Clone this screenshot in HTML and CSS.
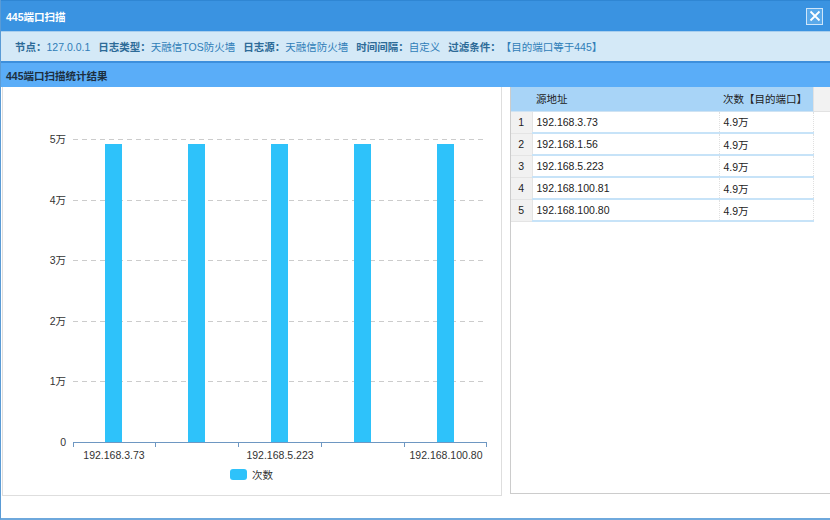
FILE: index.html
```html
<!DOCTYPE html>
<html lang="zh-CN">
<head>
    <meta charset="UTF-8">
    <title>445端口扫描</title>
    <link rel="stylesheet" href="styles.css">
</head>
<body>
    <div class="dialog">
        <div class="dialog-title">
            <span>445端口扫描</span>
            <a class="close-btn" href="#">
                <svg width="12" height="12" viewBox="0 0 12 12"><path d="M1.5 1.5 L10.5 10.5 M10.5 1.5 L1.5 10.5" stroke="#fff" stroke-width="1.8"/></svg>
            </a>
        </div>
        <div class="info-bar">
            <b>节点：</b><span>127.0.0.1</span>
            <b>日志类型：</b><span>天融信TOS防火墙</span>
            <b>日志源：</b><span>天融信防火墙</span>
            <b>时间间隔：</b><span>自定义</span>
            <b>过滤条件：</b><span>【目的端口等于445】</span>
        </div>
        <div class="section-head">445端口扫描统计结果</div>
        <div class="content">
            <div class="chart-panel">
                <svg width="498" height="406" viewBox="3 88 498 406">
                    <g class="grid">
                        <line x1="73" y1="140.5" x2="487" y2="140.5"/>
                        <line x1="73" y1="201.5" x2="487" y2="201.5"/>
                        <line x1="73" y1="261.5" x2="487" y2="261.5"/>
                        <line x1="73" y1="322.5" x2="487" y2="322.5"/>
                        <line x1="73" y1="382.5" x2="487" y2="382.5"/>
                    </g>
                    <g class="ylabels">
                        <text x="66" y="144">5万</text>
                        <text x="66" y="205">4万</text>
                        <text x="66" y="265">3万</text>
                        <text x="66" y="326">2万</text>
                        <text x="66" y="386">1万</text>
                        <text x="66" y="447">0</text>
                    </g>
                    <g class="bars">
                        <rect x="105" y="145" width="17" height="298"/>
                        <rect x="188" y="145" width="17" height="298"/>
                        <rect x="271" y="145" width="17" height="298"/>
                        <rect x="354" y="145" width="17" height="298"/>
                        <rect x="437" y="145" width="17" height="298"/>
                    </g>
                    <g class="axis">
                        <line x1="73" y1="443.5" x2="487" y2="443.5"/>
                        <line x1="73.5" y1="443" x2="73.5" y2="448"/>
                        <line x1="155.5" y1="443" x2="155.5" y2="448"/>
                        <line x1="238.5" y1="443" x2="238.5" y2="448"/>
                        <line x1="321.5" y1="443" x2="321.5" y2="448"/>
                        <line x1="404.5" y1="443" x2="404.5" y2="448"/>
                        <line x1="486.5" y1="443" x2="486.5" y2="448"/>
                    </g>
                    <g class="xlabels">
                        <text x="114" y="460">192.168.3.73</text>
                        <text x="280" y="460">192.168.5.223</text>
                        <text x="446" y="460">192.168.100.80</text>
                    </g>
                    <rect class="legend-box" x="230" y="470" width="17" height="11" rx="3"/>
                    <text class="legend-text" x="252" y="480">次数</text>
                </svg>
            </div>
            <div class="table-panel">
                <table class="result-table">
                    <thead>
                        <tr><th class="num"></th><th class="src">源地址</th><th class="cnt">次数【目的端口】</th><th class="pad"></th></tr>
                    </thead>
                    <tbody>
                        <tr><td class="num">1</td><td>192.168.3.73</td><td>4.9万</td><td class="pad"></td></tr>
                        <tr><td class="num">2</td><td>192.168.1.56</td><td>4.9万</td><td class="pad"></td></tr>
                        <tr><td class="num">3</td><td>192.168.5.223</td><td>4.9万</td><td class="pad"></td></tr>
                        <tr><td class="num">4</td><td>192.168.100.81</td><td>4.9万</td><td class="pad"></td></tr>
                        <tr><td class="num">5</td><td>192.168.100.80</td><td>4.9万</td><td class="pad"></td></tr>
                    </tbody>
                </table>
            </div>
        </div>
    </div>
</body>
</html>
```

FILE: styles.css
```css
* { margin: 0; padding: 0; box-sizing: border-box; }
body { font-family: "Liberation Sans", "Noto Sans CJK SC", sans-serif; font-size: 10.5px; color: #333; background: #fff; overflow: hidden; }
.dialog { width: 830px; height: 520px; border-left: 1px solid #5a9bd5; border-bottom: 2px solid #6ea8dc; display: flex; flex-direction: column; }
.dialog-title { height: 31px; background: #3a93e1; color: #fff; font-weight: bold; display: flex; align-items: center; justify-content: space-between; padding: 0 7px 0 5px; border-top: 1px solid #2f86d3; }
.close-btn { width: 17px; height: 17px; border: 1px solid #cfe6fa; background: #5aa9ea; display: flex; align-items: center; justify-content: center; }
.info-bar { height: 30px; background: #d4e9f7; border-top: 1px solid #a9cfee; display: flex; align-items: center; padding-left: 14px; color: #2f7db8; white-space: nowrap; }
.info-bar b { color: #2d6b98; margin-left: 8px; }
.info-bar b:first-child { margin-left: 0; }
.section-head { height: 26px; background: #5aadf8; border-top: 2px solid #3d8fdc; color: #1d2f40; font-weight: bold; display: flex; align-items: center; padding-left: 5px; }
.content { flex: 1; display: flex; gap: 8px; padding-left: 1px; }
.chart-panel { width: 500px; height: 409px; border: 1px solid #dedede; border-top: none; }
.chart-panel svg { display: block; }
.grid line { stroke: #cccccc; stroke-dasharray: 5 4; }
.ylabels text { font-size: 10.5px; fill: #333; text-anchor: end; }
.bars rect { fill: #2ec2fa; }
.axis line { stroke: #6e97c2; }
.xlabels text { font-size: 10.5px; fill: #333; text-anchor: middle; }
.legend-box { fill: #2ec2fa; }
.legend-text { font-size: 10.5px; fill: #333; }
.table-panel { flex: 1; height: 407px; border: 1px solid #cccccc; border-top: none; border-right: none; }
.result-table { border-collapse: collapse; width: 319px; color: #222; white-space: nowrap; }
.result-table th { height: 24px; background: #a8d4f7; font-weight: normal; text-align: left; padding-left: 4px; border-bottom: 1px solid #cfe3f3; }
.result-table th.num { width: 21px; }
.result-table th.src { width: 187px; }
.result-table th.cnt { width: 94px; }
.result-table th.pad { background: #f2f2f2; border-bottom: 1px solid #e2e2e2; border-left: 1px solid #e2e2e2; }
.result-table td { height: 22px; padding-left: 4px; border-bottom: 2px solid #c7e3f8; border-right: 1px dotted #e0e0e0; }
.result-table td.num { background: #f1f1f1; text-align: center; padding-left: 0; border-right: 1px solid #e4e4e4; border-bottom: 1px solid #e4e4e4; }
.result-table td.pad { border: none; background: #fff; }
```
